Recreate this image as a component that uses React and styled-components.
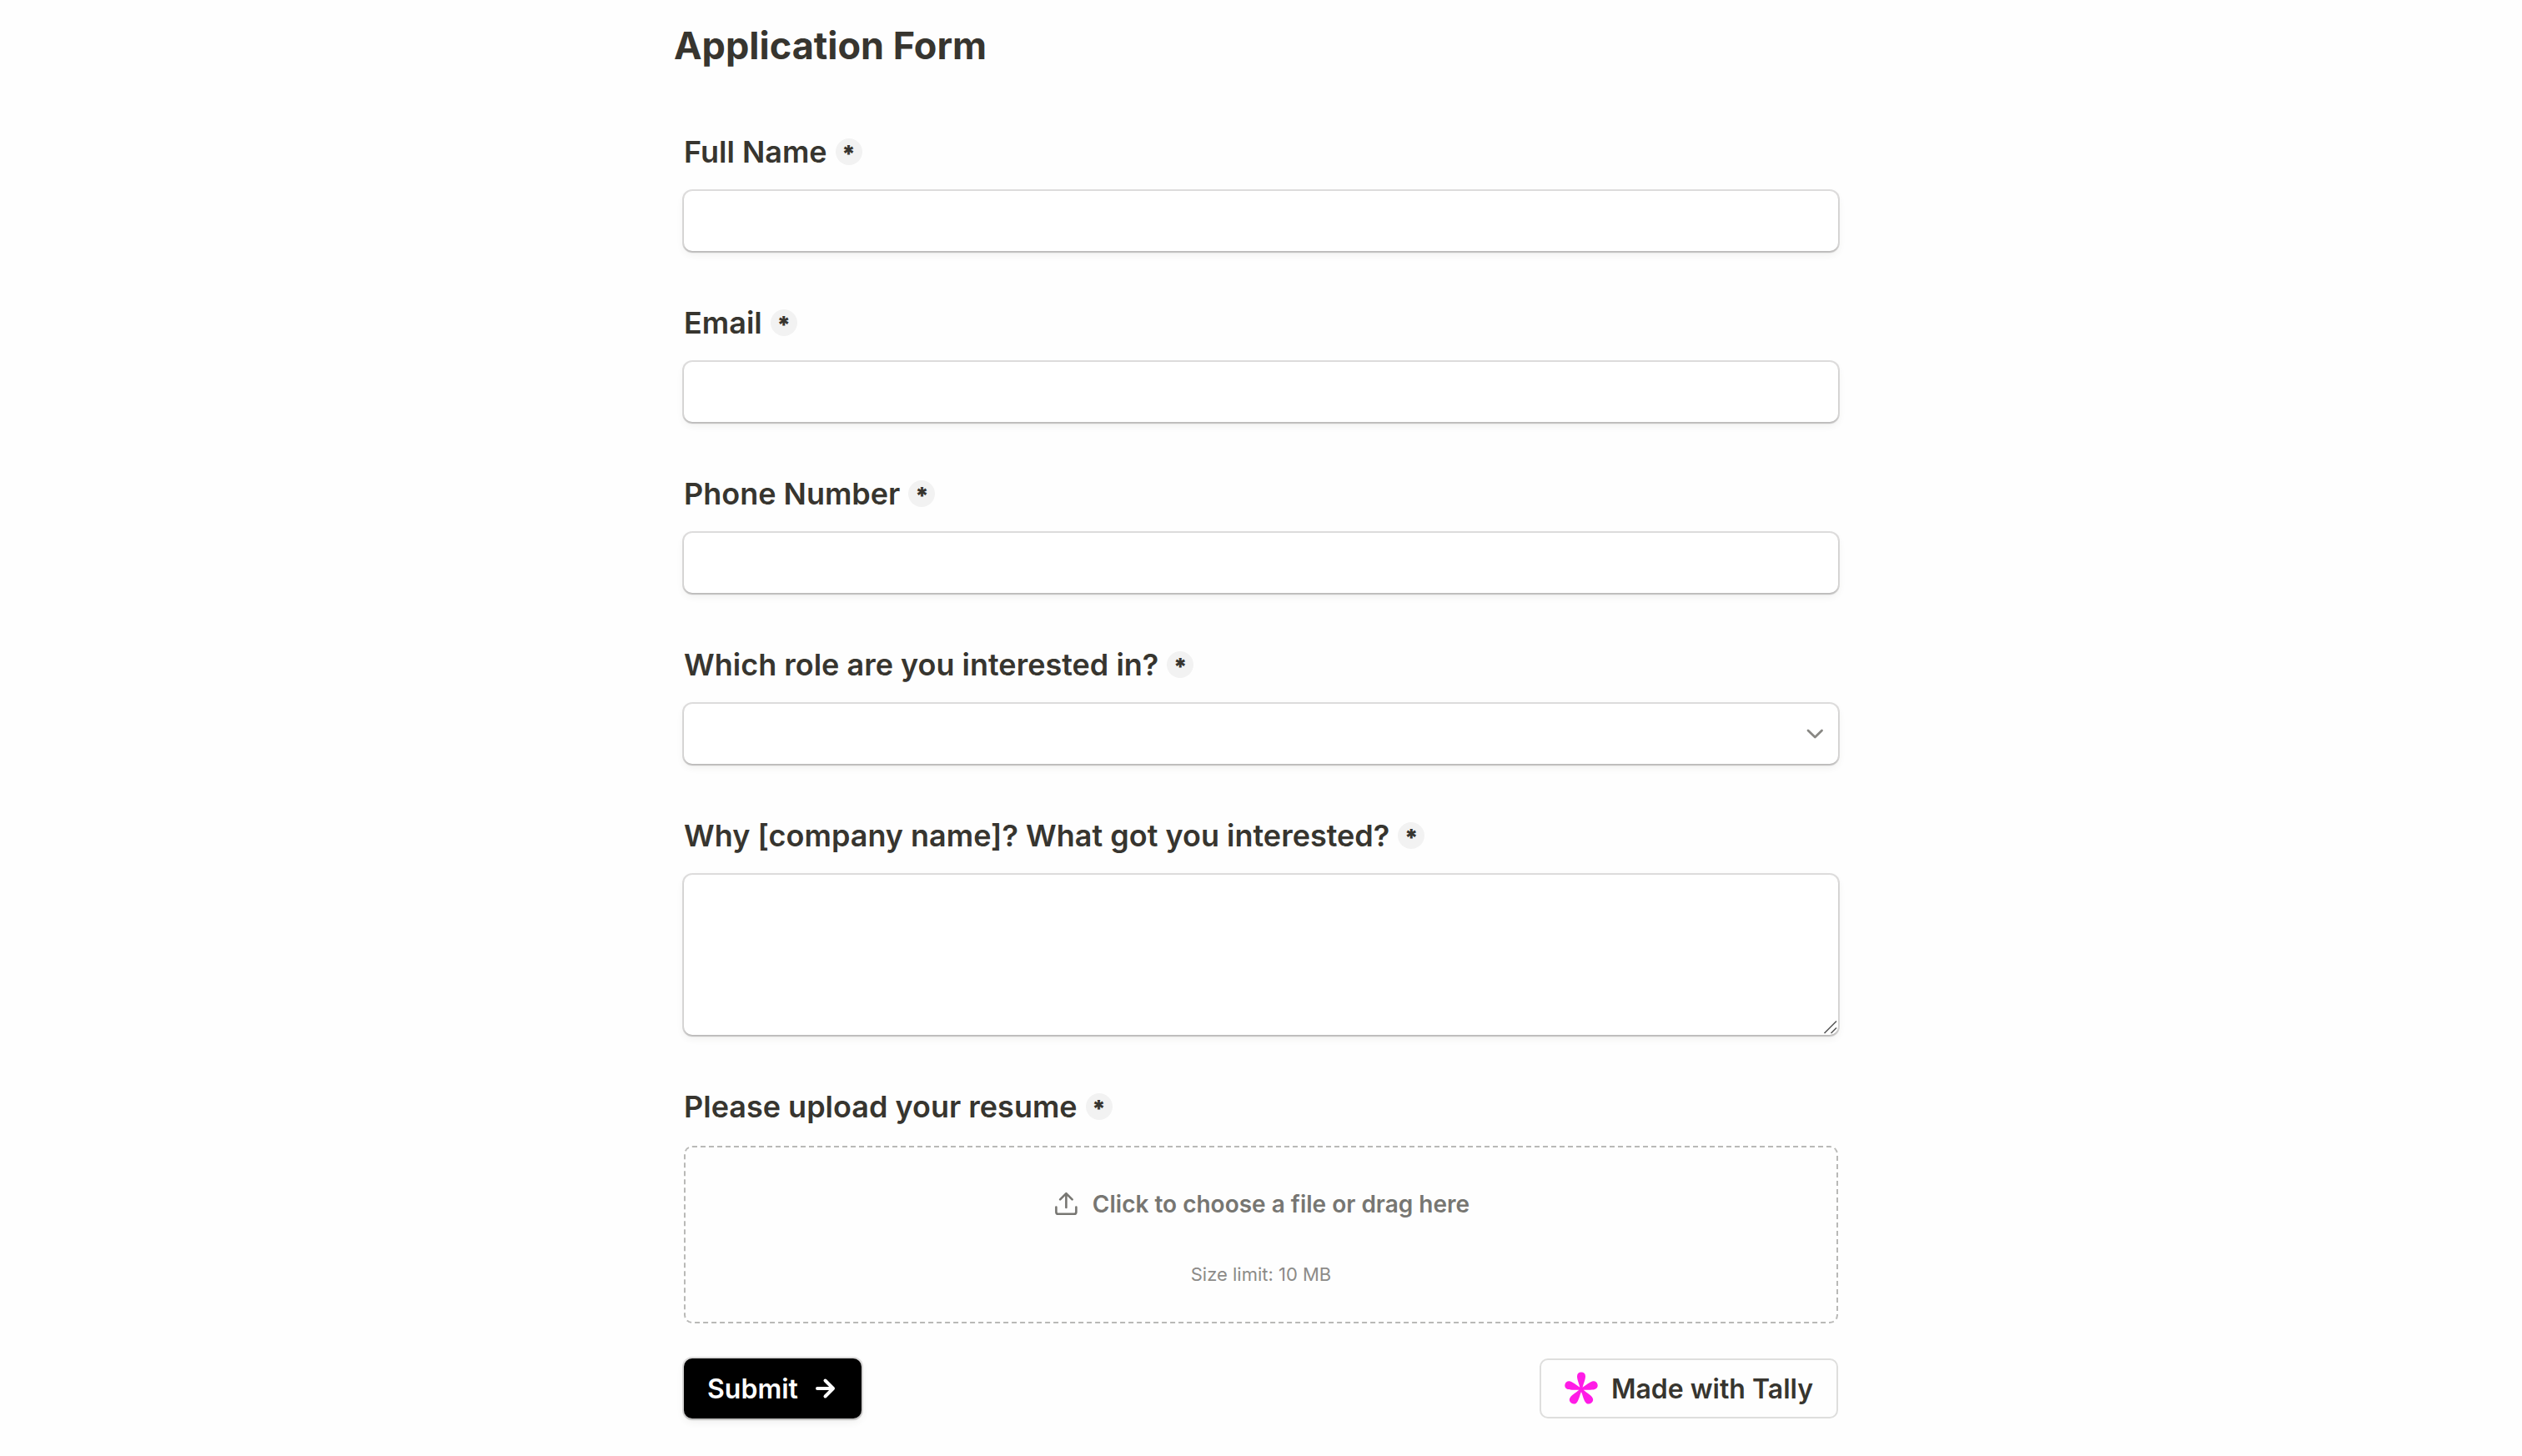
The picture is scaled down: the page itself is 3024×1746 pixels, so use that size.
import React from "react";
import styled, { createGlobalStyle } from "styled-components";

const GlobalStyle = createGlobalStyle`
  * {
    box-sizing: border-box;
  }
  body {
    margin: 0;
    background: #fefefe;
    color: #37352f;
    font-family: Inter, "Liberation Sans", sans-serif;
  }
`;

const Form = styled.form`
  max-width: 1408px;
  margin: 0 auto;
  padding: 26px 0 44px;
`;

const Title = styled.h1`
  margin: 0 0 74px;
  font-size: 45px;
  line-height: 58px;
  font-weight: 700;
`;

const Fields = styled.div`
  display: flex;
  flex-direction: column;
  gap: 62px;
  padding: 0 12px;
`;

const Field = styled.div`
  display: flex;
  flex-direction: column;
  gap: 23px;
`;

const LabelRow = styled.div`
  display: flex;
  align-items: center;
  gap: 10px;
`;

const Label = styled.label`
  font-size: 36px;
  line-height: 48px;
  font-weight: 600;
`;

const Required = styled.span`
  display: flex;
  justify-content: center;
  width: 32px;
  height: 32px;
  border-radius: 50%;
  background: #f2f2f2;
  font-size: 28px;
  line-height: 38px;
  font-weight: 900;
`;

const control = `
  display: block;
  width: 100%;
  height: 72px;
  margin: 0;
  padding: 0 20px;
  border: 0;
  border-radius: 10px;
  outline: none;
  background: #fff;
  color: inherit;
  font-family: inherit;
  font-size: 32px;
  box-shadow: 0 2px 2px rgba(0, 0, 0, 0.12),
    0 0 0 2px rgba(61, 59, 53, 0.16), 0 4px 10px rgba(61, 59, 53, 0.08);
`;

const Input = styled.input`
  ${control}
`;

const Select = styled.select`
  ${control}
  appearance: none;
`;

const TextArea = styled.textarea`
  ${control}
  height: 192px;
  padding: 16px 20px;
  resize: none;
`;

const ControlWrapper = styled.div`
  position: relative;
`;

const Chevron = styled.svg`
  position: absolute;
  right: 16px;
  top: 24px;
  pointer-events: none;
`;

const Grip = styled.svg`
  position: absolute;
  right: 0;
  bottom: 0;
  pointer-events: none;
`;

const DropZone = styled.label`
  display: flex;
  flex-direction: column;
  align-items: center;
  gap: 54px;
  height: 213px;
  padding-top: 51px;
  border: 2px dashed #b9b9b7;
  border-radius: 10px;
  cursor: pointer;
`;

const FileInput = styled.input`
  position: absolute;
  width: 1px;
  height: 1px;
  opacity: 0;
`;

const DropText = styled.span`
  display: flex;
  align-items: center;
  gap: 16px;
  color: #777672;
  font-size: 28px;
  line-height: 34px;
  font-weight: 600;
`;

const DropHint = styled.span`
  color: #8c8b88;
  font-size: 22px;
  line-height: 26px;
`;

const Footer = styled.div`
  display: flex;
  justify-content: space-between;
  padding: 42px 12px 0;
`;

const Submit = styled.button`
  ${control}
  display: flex;
  align-items: center;
  gap: 20px;
  width: auto;
  padding: 0 28px;
  background: #000;
  color: #fff;
  font-weight: 600;
`;

const MadeWith = styled.a`
  display: flex;
  align-items: center;
  gap: 16px;
  height: 72px;
  padding: 0 28px;
  border: 2px solid #dededd;
  border-radius: 10px;
  color: inherit;
  font-size: 32px;
  font-weight: 600;
  text-decoration: none;
`;

const petals = [0, 72, 144, 216, 288];

function TallyLogo() {
  return (
    <svg width="40" height="40" viewBox="0 0 40 40" fill="#ff1ce6">
      {petals.map((angle) => (
        <path
          key={angle}
          transform={`rotate(${angle} 20 21)`}
          d="M18.8 22 C18.4 16 15 10.5 15 5.6 C15 2.4 17 0.6 20 0.6 C23 0.6 25 2.4 25 5.6 C25 10.5 21.6 16 21.2 22 Z"
        />
      ))}
    </svg>
  );
}

function FormField(props) {
  return (
    <Field>
      <LabelRow>
        <Label htmlFor={props.id}>{props.label}</Label>
        <Required>*</Required>
      </LabelRow>
      {props.children}
    </Field>
  );
}

function App() {
  return (
    <>
      <GlobalStyle />
      <Form onSubmit={(e) => e.preventDefault()}>
        <Title>Application Form</Title>
        <Fields>
          <FormField id="name" label="Full Name">
            <Input id="name" type="text" />
          </FormField>
          <FormField id="email" label="Email">
            <Input id="email" type="email" />
          </FormField>
          <FormField id="phone" label="Phone Number">
            <Input id="phone" type="tel" />
          </FormField>
          <FormField id="role" label="Which role are you interested in?">
            <ControlWrapper>
              <Select id="role" />
              <Chevron width="24" height="24" viewBox="0 0 24 24" fill="none">
                <path
                  d="M4 8 L12.3 16 L20.5 8"
                  stroke="#898884"
                  strokeWidth="2.8"
                  strokeLinecap="round"
                  strokeLinejoin="round"
                />
              </Chevron>
            </ControlWrapper>
          </FormField>
          <FormField id="why" label="Why [company name]? What got you interested?">
            <ControlWrapper>
              <TextArea id="why" />
              <Grip width="18" height="18" viewBox="0 0 18 18" fill="none">
                <path
                  d="M1.5 16 L16 1.5 M9.5 16 L16 9.5"
                  stroke="#5a5a5a"
                  strokeWidth="1.6"
                />
              </Grip>
            </ControlWrapper>
          </FormField>
          <FormField id="resume" label="Please upload your resume">
            <DropZone>
              <FileInput id="resume" type="file" />
              <DropText>
                <svg width="32" height="32" viewBox="0 0 32 32" fill="none">
                  <path
                    d="M16.4 20 V3.5 M9.2 10.4 L16.4 3.2 L23.6 10.4 M4.4 19.5 V25.4 Q4.4 27.8 6.8 27.8 H26 Q28.4 27.8 28.4 25.4 V19.5"
                    stroke="#777672"
                    strokeWidth="2.6"
                    strokeLinecap="round"
                    strokeLinejoin="round"
                  />
                </svg>
                Click to choose a file or drag here
              </DropText>
              <DropHint>Size limit: 10 MB</DropHint>
            </DropZone>
          </FormField>
        </Fields>
        <Footer>
          <Submit type="submit">
            Submit
            <svg width="28" height="28" viewBox="0 0 28 28" fill="none">
              <path
                d="M3 14 H22 M12.5 4.5 L22 14 L12.5 23.5"
                stroke="#fff"
                strokeWidth="4"
                strokeLinecap="round"
                strokeLinejoin="round"
              />
            </svg>
          </Submit>
          <MadeWith href="#tally">
            <TallyLogo />
            Made with Tally
          </MadeWith>
        </Footer>
      </Form>
    </>
  );
}

export default App;
